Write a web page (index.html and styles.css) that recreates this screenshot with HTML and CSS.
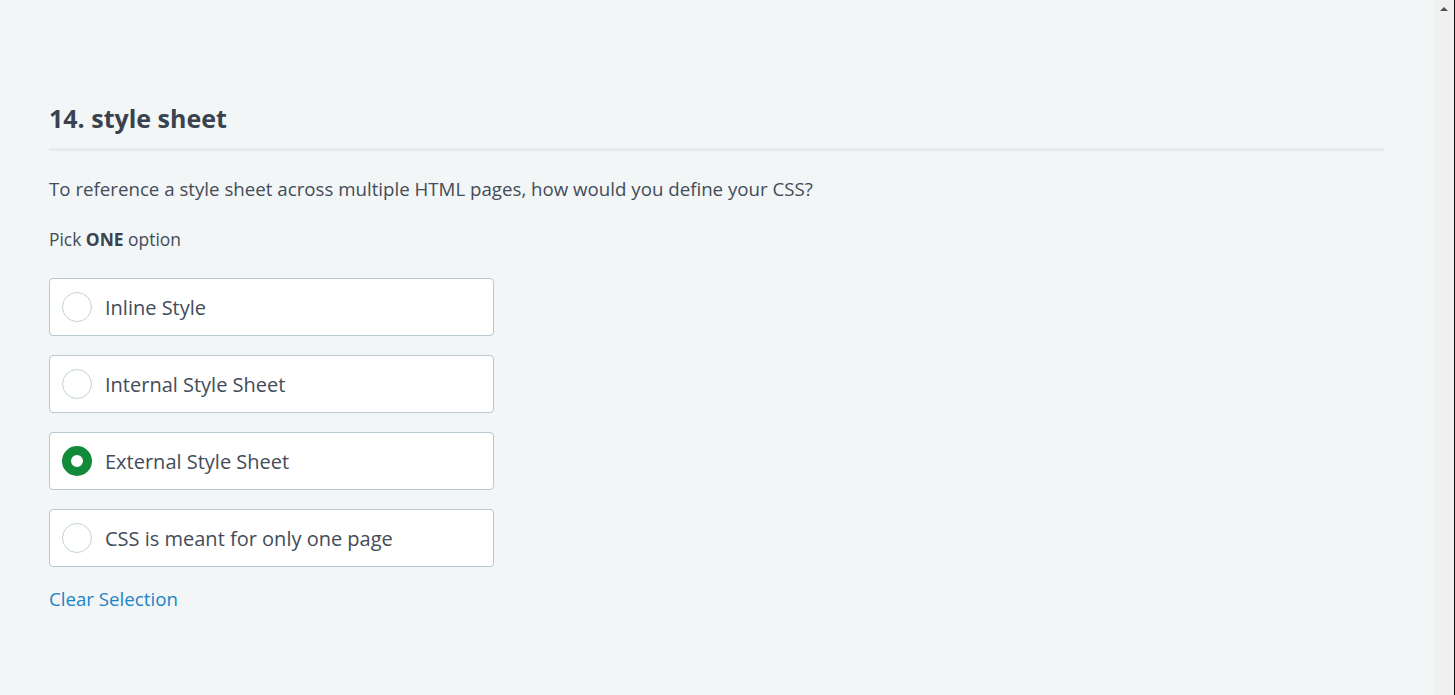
FILE: index.html
```html
<!DOCTYPE html>
<html lang="en">
<head>
<meta charset="utf-8">
<title>14. style sheet</title>
<link rel="stylesheet" href="styles.css">
</head>
<body>
<div class="viewport">
  <main class="page">
    <section class="question">
      <h1 class="q-title">14. style sheet</h1>
      <p class="q-text">To reference a style sheet across multiple HTML pages, how would you define your CSS?</p>
      <p class="q-hint">Pick <strong>ONE</strong> option</p>
      <div class="options">
        <label class="option"><span class="radio"></span><span class="opt-label">Inline Style</span></label>
        <label class="option"><span class="radio"></span><span class="opt-label">Internal Style Sheet</span></label>
        <label class="option"><span class="radio checked"></span><span class="opt-label">External Style Sheet</span></label>
        <label class="option"><span class="radio"></span><span class="opt-label">CSS is meant for only one page</span></label>
      </div>
      <a class="clear" href="#">Clear Selection</a>
    </section>
  </main>
  <div class="scrollbar"><span class="arrow"></span></div>
</div>
</body>
</html>
```
FILE: styles.css
```css
html, body {
  margin: 0;
  padding: 0;
  height: 100%;
}
body {
  background: #f3f6f7;
  font-family: "Open Sans", "Liberation Sans", sans-serif;
  color: #39424e;
  overflow: hidden;
}
.viewport {
  display: flex;
  height: 695px;
}
.page {
  flex: 1;
  padding: 0 50px 0 49px;
}
.question {
  padding-top: 96px;
}
.q-title {
  margin: 0;
  font-size: 25px;
  font-weight: 700;
  line-height: 44px;
  padding-bottom: 8px;
  border-bottom: 3px solid #e5eaeb;
  color: #39424e;
}
.q-text {
  margin: 26px 0 0;
  font-size: 18.7px;
  line-height: 24px;
  color: #434c58;
}
.q-hint {
  margin: 27px 0 0;
  font-size: 17.4px;
  line-height: 22px;
  color: #434c58;
}
.q-hint strong {
  font-weight: 700;
  color: #39424e;
}
.options {
  display: flex;
  flex-direction: column;
  gap: 19px;
  margin-top: 28px;
  width: 445px;
}
.option {
  display: flex;
  align-items: center;
  box-sizing: border-box;
  height: 58px;
  padding: 0 12px;
  background: #fff;
  border: 1px solid #b7c8cf;
  border-radius: 4px;
  cursor: pointer;
}
.radio {
  box-sizing: border-box;
  width: 30px;
  height: 30px;
  border-radius: 50%;
  border: 1px solid #c2d3d8;
  background: #fff;
  flex: none;
}
.radio.checked {
  border: 9px solid #118a39;
}
.opt-label {
  margin-left: 13px;
  font-size: 20px;
  color: #434c58;
}
.clear {
  display: inline-block;
  margin-top: 19px;
  font-size: 18.7px;
  line-height: 26px;
  color: #1b83c7;
  text-decoration: none;
}
.scrollbar {
  flex: none;
  width: 20px;
  background: #f0f0f0;
  border-right: 1px solid #111;
  position: relative;
}
.arrow {
  position: absolute;
  top: 7px;
  left: 6px;
  width: 0;
  height: 0;
  border-left: 4px solid transparent;
  border-right: 4px solid transparent;
  border-bottom: 4px solid #505050;
}
```
